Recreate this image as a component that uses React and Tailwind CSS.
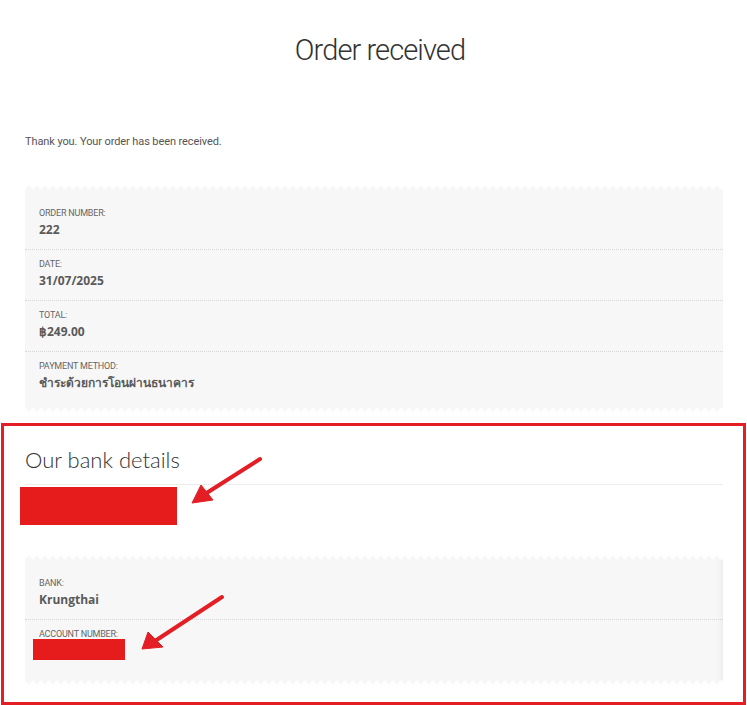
import React from 'react';

const Zigzag = ({ id, flip }) => (
  <svg className="block w-full h-[5px]" aria-hidden="true">
    <defs>
      <pattern id={id} width="8" height="5" patternUnits="userSpaceOnUse">
        <path d={flip ? 'M0 0 L4 5 L8 0 Z' : 'M0 5 L4 0 L8 5 Z'} fill="#f7f7f7" />
      </pattern>
    </defs>
    <rect width="100%" height="5" fill={`url(#${id})`} />
  </svg>
);

const Row = ({ label, value, first }) => (
  <li className={`list-none pb-[10px] px-[14px] ${first ? 'pt-[9px]' : 'pt-[8px] border-t border-dotted border-[#d6d6d6]'}`}>
    <div className="text-[9px] leading-[12px] uppercase text-[#666] tracking-[-0.2px]">{label}</div>
    <div className="mt-[2px] text-[12px] leading-[18px] font-bold text-[#5a5a5a] font-['Open_Sans','Noto_Sans',sans-serif]">
      {value}
    </div>
  </li>
);

const Card = ({ id, rows, shade }) => (
  <div className="relative">
    <Zigzag id={`${id}-top`} />
    <ul className={`bg-[#f7f7f7] pt-[8px] pb-[5px] ${shade ? 'shadow-[inset_-8px_0_6px_-6px_rgba(0,0,0,0.05)]' : ''}`}>
      {rows.map((r, i) => (
        <Row key={r.label} label={r.label} value={r.value} first={i === 0} />
      ))}
    </ul>
    <Zigzag id={`${id}-bottom`} flip />
  </div>
);

export default function App() {
  const orderRows = [
    { label: 'Order number:', value: '222' },
    { label: 'Date:', value: '31/07/2025' },
    { label: 'Total:', value: '฿249.00' },
    { label: 'Payment method:', value: 'ชำระด้วยการโอนผ่านธนาคาร' },
  ];

  const bankRows = [
    { label: 'Bank:', value: 'Krungthai' },
    { label: 'Account number:', value: <span className="inline-block h-[18px]" /> },
  ];

  return (
    <div className="relative min-h-screen bg-white font-['Roboto',sans-serif] text-[#333]">
      <div className="pl-[25px] pr-[24px] pb-[40px]">
        <h1 className="pt-[32px] pl-[12px] text-center text-[29px] leading-[36px] font-light tracking-[-0.9px] text-[#333]">
          Order received
        </h1>

        <p className="mt-[66px] text-[11px] leading-[16px] text-[#555] tracking-[-0.1px]">
          Thank you. Your order has been received.
        </p>

        <div className="mt-[35px]">
          <Card id="order" rows={orderRows} />
        </div>

        <section className="mt-[34px]">
          <h2 className="pb-[10px] border-b border-[#ececec] text-[22px] leading-[28px] font-light text-[#333] font-['Lato',sans-serif]">
            Our bank details
          </h2>
          <div className="relative h-[70px]">
            <div className="absolute left-[-5px] top-[2px] w-[157px] h-[38px] bg-[#e61c1c]" />
          </div>
          <div className="relative">
            <Card id="bank" rows={bankRows} shade />
            <div className="absolute left-[8px] top-[84px] w-[92px] h-[21px] bg-[#e61c1c]" />
          </div>
        </section>
      </div>

      {/* annotation overlay */}
      <div className="absolute left-[1px] top-[423px] w-[745px] h-[282px] border-[3.5px] border-[#e31e24] pointer-events-none" />
      <svg className="absolute left-0 top-0 w-[747px] h-[705px] pointer-events-none" viewBox="0 0 747 705">
        <g fill="#e31e24" stroke="#e31e24">
          <line x1="260" y1="459" x2="205" y2="494" strokeWidth="4" strokeLinecap="round" />
          <polygon points="192,503 201,485 213,500" strokeWidth="1" strokeLinejoin="round" />
          <line x1="222" y1="597" x2="155" y2="641" strokeWidth="4" strokeLinecap="round" />
          <polygon points="142,649 148,632 163,647" strokeWidth="1" strokeLinejoin="round" />
        </g>
      </svg>
    </div>
  );
}
